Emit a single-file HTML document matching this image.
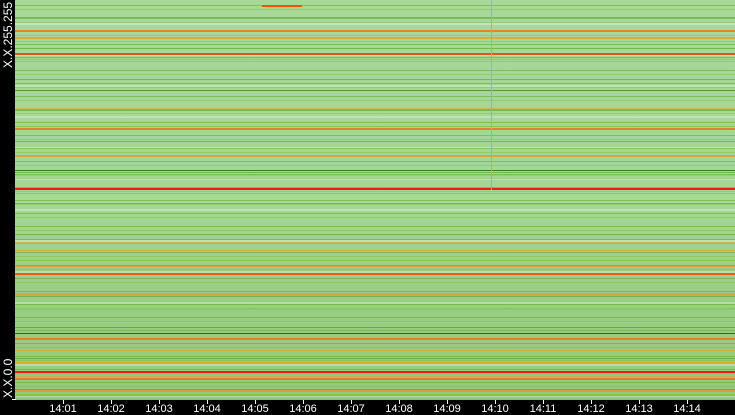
<!DOCTYPE html>
<html><head><style>
html,body{margin:0;padding:0;background:#000;width:735px;height:415px;overflow:hidden;font-family:"Liberation Sans",sans-serif}
#plot{position:absolute;left:15px;top:0;width:720px;height:400px;
background:
repeating-linear-gradient(180deg,transparent 0 5px,rgba(90,170,40,.55) 5px 6px,transparent 6px 9px,rgba(120,190,60,.45) 9px 10px,transparent 10px 13px),
repeating-linear-gradient(180deg,transparent 0 17px,rgba(70,150,20,.5) 17px 18px,transparent 18px 23px,rgba(255,255,255,.3) 23px 25px,transparent 25px 31px),
repeating-linear-gradient(180deg,transparent 0 41px,rgba(240,150,30,.45) 41px 42px,transparent 42px 59px,rgba(130,190,20,.5) 59px 60px,transparent 60px 67px),
linear-gradient(180deg,#a8d898 0,#a4d694 180px,#a6d896 200px,#9ccf88 260px,#94ca7c 400px);}
.l{position:absolute;left:0;width:720px}
.lab{position:absolute;color:#fff;font-size:12px;transform:rotate(-90deg);transform-origin:left top;left:1px;white-space:nowrap}
.t{position:absolute;top:403px;color:#fff;font-size:11px;width:40px;margin-left:-20px;text-align:center}
.k{position:absolute;top:400px;width:1px;height:4px;background:#fff}
</style></head><body>
<div id="plot">
<div class="l" style="top:30px;height:2px;background:#f08018;opacity:.9"></div>
<div class="l" style="top:37px;height:2px;background:#f0a020;opacity:.8"></div>
<div class="l" style="top:53px;height:2px;background:#f04010;opacity:.9"></div>
<div class="l" style="top:90px;height:1px;background:#5a9a30"></div>
<div class="l" style="top:128px;height:2px;background:#f07020;opacity:.85"></div>
<div class="l" style="top:155px;height:2px;background:#f09020;opacity:.7"></div>
<div class="l" style="top:170px;height:1px;background:#3c7a20"></div>
<div class="l" style="top:188px;height:2px;background:#f01818"></div>
<div class="l" style="top:250px;height:1px;background:#f0a020;opacity:.7"></div>
<div class="l" style="top:265px;height:2px;background:#f09020;opacity:.7"></div>
<div class="l" style="top:273px;height:2px;background:#f05010;opacity:.9"></div>
<div class="l" style="top:293px;height:2px;background:#f09020;opacity:.6"></div>
<div class="l" style="top:333px;height:1px;background:#2e6a18"></div>
<div class="l" style="top:338px;height:2px;background:#f07020;opacity:.85"></div>
<div class="l" style="top:350px;height:1px;background:#f0a020;opacity:.7"></div>
<div class="l" style="top:362px;height:2px;background:#f0a020;opacity:.7"></div>
<div class="l" style="top:371px;height:2px;background:#f01818"></div>
<div class="l" style="top:378px;height:2px;background:#f07020;opacity:.85"></div>
<div class="l" style="top:390px;height:2px;background:#f09020;opacity:.7"></div>
<div style="position:absolute;left:247px;top:5px;width:40px;height:2px;background:#f05010"></div>
<div style="position:absolute;left:476px;top:0;width:1px;height:190px;background:#f0a020"></div>
</div>
<div class="lab" style="top:68px">X.X.255.255</div>
<div class="lab" style="top:398px">X.X.0.0</div>
<div style="position:absolute;left:12px;top:399px;width:4px;height:1px;background:#fff"></div>
<div class="k" style="left:63px"></div><div class="t" style="left:63px">14:01</div>
<div class="k" style="left:111px"></div><div class="t" style="left:111px">14:02</div>
<div class="k" style="left:159px"></div><div class="t" style="left:159px">14:03</div>
<div class="k" style="left:207px"></div><div class="t" style="left:207px">14:04</div>
<div class="k" style="left:255px"></div><div class="t" style="left:255px">14:05</div>
<div class="k" style="left:303px"></div><div class="t" style="left:303px">14:06</div>
<div class="k" style="left:351px"></div><div class="t" style="left:351px">14:07</div>
<div class="k" style="left:399px"></div><div class="t" style="left:399px">14:08</div>
<div class="k" style="left:447px"></div><div class="t" style="left:447px">14:09</div>
<div class="k" style="left:495px"></div><div class="t" style="left:495px">14:10</div>
<div class="k" style="left:543px"></div><div class="t" style="left:543px">14:11</div>
<div class="k" style="left:591px"></div><div class="t" style="left:591px">14:12</div>
<div class="k" style="left:639px"></div><div class="t" style="left:639px">14:13</div>
<div class="k" style="left:687px"></div><div class="t" style="left:687px">14:14</div>
</body></html>
